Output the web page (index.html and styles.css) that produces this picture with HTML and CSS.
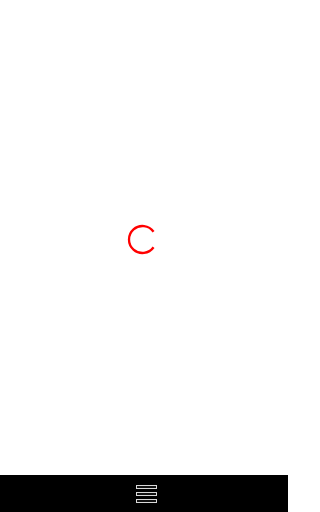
FILE: index.html
```html
<!DOCTYPE html>
<html>
<head>
<meta charset="utf-8">
<link rel="stylesheet" href="styles.css">
</head>
<body>
<div class="app">
  <main class="content">
    <svg class="spinner" width="36" height="36" viewBox="0 0 36 36">
      <path d="M 27.56 11.76 A 13.5 13.5 0 1 0 27.56 27.24" fill="none" stroke="#ff0000" stroke-width="2.3"/>
    </svg>
  </main>
  <footer class="appbar">
    <div class="menu">
      <span class="bar"></span>
      <span class="bar"></span>
      <span class="bar"></span>
    </div>
  </footer>
</div>
</body>
</html>
```
FILE: styles.css
```css
html, body {
  margin: 0;
  padding: 0;
  background: #ffffff;
  font-family: "Open Sans", "Liberation Sans", sans-serif;
}
.app {
  width: 288px;
  height: 512px;
  display: flex;
  flex-direction: column;
}
.content {
  flex: 1;
  display: flex;
  align-items: center;
  justify-content: center;
  background: #ffffff;
}
.spinner {
  display: block;
  overflow: visible;
}
.appbar {
  height: 37px;
  background: #000000;
  display: flex;
  align-items: center;
  justify-content: center;
}
.menu {
  display: flex;
  flex-direction: column;
  gap: 3px;
  margin-left: 4px;
  margin-top: 1px;
}
.bar {
  display: block;
  width: 19px;
  height: 2px;
  border: 1px solid #d8d8d8;
  background: #111111;
}
```
